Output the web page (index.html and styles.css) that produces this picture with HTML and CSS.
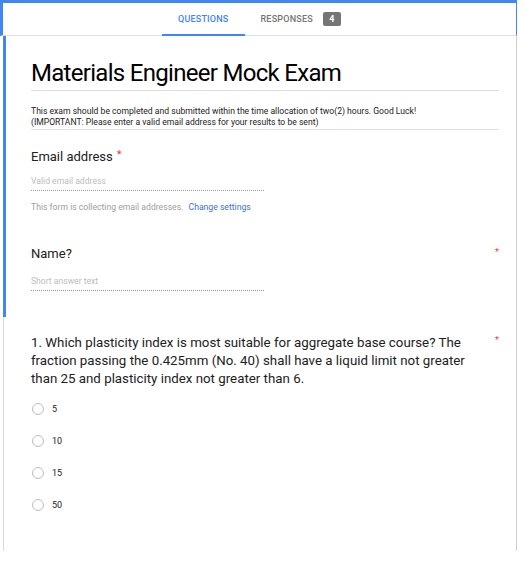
FILE: index.html
```html
<!DOCTYPE html>
<html lang="en">
<head>
<meta charset="utf-8">
<title>Materials Engineer Mock Exam</title>
<link rel="stylesheet" href="styles.css">
</head>
<body>
<div class="page">
  <header class="tabs">
    <div class="tab tab-active">QUESTIONS</div>
    <div class="tab">RESPONSES <span class="badge">4</span></div>
  </header>
  <main class="card">
    <section class="block block-active">
      <div class="title-block">
        <h1 class="title">Materials Engineer Mock Exam</h1>
      </div>
      <p class="desc">This exam should be completed and submitted within the time allocation of two(2) hours. Good Luck!<br>(IMPORTANT: Please enter a valid email address for your results to be sent)</p>
      <div class="item item-email">
        <div class="label">Email address<span class="req-sup">*</span></div>
        <div class="input input-email">Valid email address</div>
        <div class="note">This form is collecting email addresses. <a class="link">Change settings</a></div>
      </div>
      <div class="item item-name">
        <div class="qrow"><div class="label">Name?</div><span class="req">*</span></div>
        <div class="input input-name">Short answer text</div>
      </div>
    </section>
    <section class="block block-question">
      <div class="qrow">
        <div class="question">1. Which plasticity index is most suitable for aggregate base course? The fraction passing the 0.425mm (No. 40) shall have a liquid limit not greater than 25 and plasticity index not greater than 6.</div>
        <span class="req">*</span>
      </div>
      <ul class="options">
        <li class="option"><span class="radio"></span><span class="opt-label">5</span></li>
        <li class="option"><span class="radio"></span><span class="opt-label">10</span></li>
        <li class="option"><span class="radio"></span><span class="opt-label">15</span></li>
        <li class="option"><span class="radio"></span><span class="opt-label">50</span></li>
      </ul>
    </section>
  </main>
</div>
</body>
</html>
```
FILE: styles.css
```css
* { box-sizing: border-box; }
html, body { margin: 0; padding: 0; background: #fff; }
body { font-family: Roboto, "Liberation Sans", Arial, sans-serif; color: #212121; }

.page { width: 517px; }

.tabs {
  display: flex;
  align-items: stretch;
  height: 36px;
  border-top: 3px solid #4285f4;
  border-left: 3px solid #4285f4;
  border-right: 1px solid #4285f4;
  border-bottom: 1px solid #e0e0e0;
  padding-left: 159px;
}
.tab {
  display: flex;
  align-items: center;
  padding: 0 16px;
  font-size: 9px;
  font-weight: 500;
  letter-spacing: 0.2px;
  color: #757575;
  border-bottom: 2px solid transparent;
  margin-bottom: -1px;
}
.tab-active { color: #4285f4; border-bottom-color: #4285f4; }
.badge {
  display: inline-block;
  margin-left: 10px;
  width: 18px;
  height: 14px;
  line-height: 14px;
  text-align: center;
  background: #757575;
  color: #fff;
  border-radius: 2px;
  font-weight: 700;
  font-size: 9px;
}

.card {
  margin-left: 3px;
  border-right: 1px solid #cfcfcf;
}
.block { padding-right: 17px; }
.block-active {
  border-left: 3px solid #4285f4;
  padding-left: 25px;
  padding-top: 23px;
  padding-bottom: 26px;
}
.block-question {
  border-left: 1px solid #d3dbea;
  padding-left: 27px;
  padding-top: 17px;
  padding-bottom: 30px;
}

.title-block { border-bottom: 1px solid #e0e0e0; padding-bottom: 3px; }
.title {
  margin: 0;
  font-size: 24px;
  line-height: 28px;
  font-weight: 400;
  letter-spacing: -0.7px;
  color: #000;
}
.desc {
  margin: 15px 0 0;
  font-size: 8.6px;
  line-height: 11px;
  color: #212121;
  padding-bottom: 1px;
  border-bottom: 1px solid #e0e0e0;
}

.label { font-size: 13px; line-height: 16px; color: #212121; }
.req-sup { color: #db4437; font-size: 11px; position: relative; top: -3px; margin-left: 4px; }
.req { color: #db4437; font-size: 9px; line-height: 9px; margin-top: 2px; }

.item-email { margin-top: 19px; }
.item-name { margin-top: 33px; }

.qrow { display: flex; justify-content: space-between; align-items: flex-start; }

.input {
  width: 233px;
  font-size: 8.6px;
  line-height: 11px;
  color: #bdbdbd;
  padding-bottom: 3px;
  border-bottom: 1px dotted #9a9a9a;
}
.input-email { margin-top: 10px; }
.input-name { margin-top: 14px; }

.note { margin-top: 11px; font-size: 8.65px; line-height: 11px; color: #9e9e9e; }
.link { color: #3e6fd9; margin-left: 3px; }

.question {
  width: 445px;
  font-size: 13.3px;
  line-height: 18px;
  color: #212121;
}

.options { list-style: none; margin: 5px 0 0; padding: 0; }
.option { display: flex; align-items: center; height: 32px; }
.radio {
  width: 12px;
  height: 12px;
  margin-left: 1px;
  border: 1px solid #bdbdbd;
  border-radius: 50%;
}
.opt-label { margin-left: 8px; font-size: 9px; color: #212121; }
```
